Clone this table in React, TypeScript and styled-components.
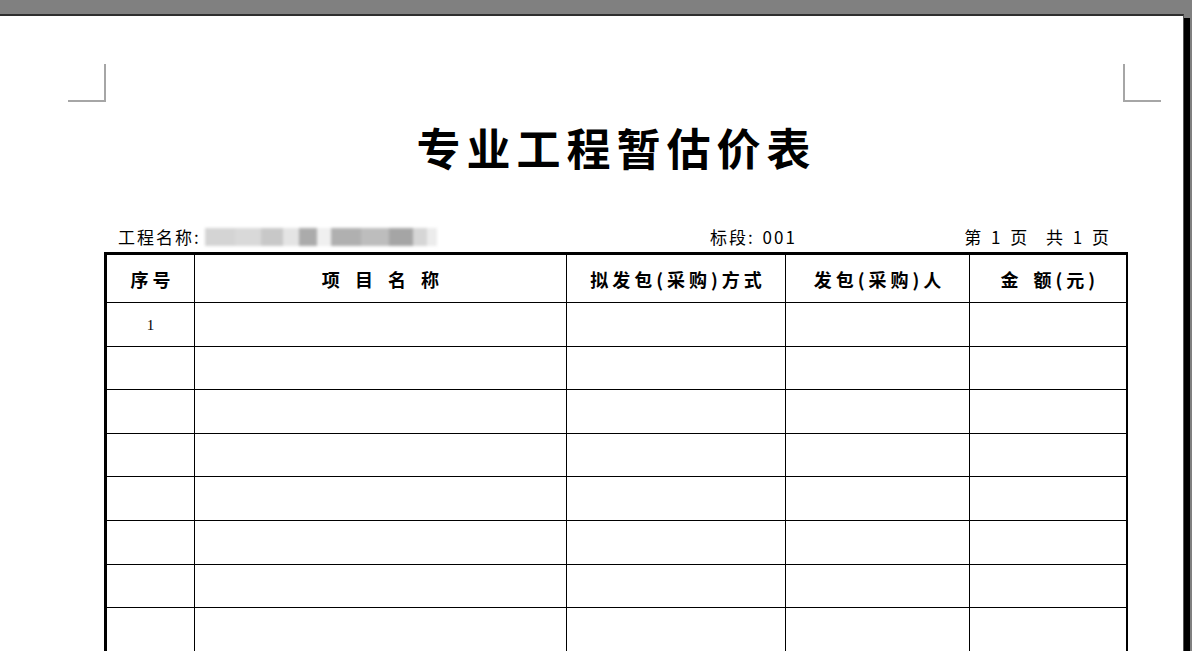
import React from "react";
import styled, { createGlobalStyle } from "styled-components";

const Global = createGlobalStyle`
  html, body { margin: 0; padding: 0; }
  body {
    background: #808080;
    font-family: "Noto Sans CJK SC", "Noto Sans", sans-serif;
    color: #000;
    overflow: hidden;
  }
`;

const Viewport = styled.div`
  width: 1192px;
  height: 651px;
  overflow: hidden;
  background: #808080;
  padding-top: 14px;
  box-sizing: border-box;
`;

const Page = styled.div`
  width: 1184px;
  height: 700px;
  background: #fff;
  border-top: 2px solid #2e2e2e;
  border-right: 1px solid #555;
  box-sizing: border-box;
  box-shadow: 6px 4px 0 0 #000;
  padding-top: 48px;
`;

const MarkRow = styled.div`
  display: flex;
  justify-content: space-between;
  padding: 0 22px 0 68px;
`;

const Mark = styled.div<{ $side: "left" | "right" }>`
  width: 36px;
  height: 36px;
  border-bottom: 2px solid #a6a6a6;
  ${(p) =>
    p.$side === "left"
      ? "border-right: 2px solid #a6a6a6;"
      : "border-left: 2px solid #a6a6a6;"}
`;

const Title = styled.h1`
  margin: 17px 0 0;
  text-align: center;
  font-size: 44px;
  line-height: 56px;
  font-weight: 700;
  letter-spacing: 6px;
  padding-left: 50px;
`;

const Sheet = styled.div`
  margin-left: 104px;
  width: 1022px;
  margin-top: 47px;
`;

const InfoRow = styled.div`
  display: flex;
  align-items: center;
  height: 30px;
  font-size: 17px;
  padding-left: 14px;
  padding-right: 16px;
  line-height: 22px;
`;

const ProjectName = styled.div`
  display: flex;
  align-items: center;
  width: 592px;
  letter-spacing: 2px;
`;

const Blurred = styled.div`
  display: flex;
  height: 18px;
  margin-left: 4px;
  filter: blur(1.5px);
`;

const BlurBlock = styled.span<{ $w: number; $c: string }>`
  display: block;
  width: ${(p) => p.$w}px;
  height: 100%;
  background: ${(p) => p.$c};
`;

const Section = styled.div`
  letter-spacing: 2px;
  word-spacing: 2px;
`;

const PageNo = styled.div`
  margin-left: auto;
  letter-spacing: 1px;
  word-spacing: 4px;
  white-space: pre;
`;

const Table = styled.table`
  width: 1021px;
  table-layout: fixed;
  border-collapse: collapse;
  border-top: 3px solid #000;
  border-left: 3px solid #000;
  border-right: 2px solid #000;
`;

const HeadCell = styled.th`
  height: 47px;
  border: 1px solid #000;
  font-size: 18px;
  font-weight: 700;
  text-align: center;
  padding: 0 0 0 4px;
  letter-spacing: 4px;
  word-spacing: 3px;
  white-space: pre;
`;

const Cell = styled.td`
  height: 43.6px;
  border: 1px solid #000;
  text-align: center;
  padding: 3px 0 0;
  font-family: "Liberation Serif", "DejaVu Serif", serif;
  font-size: 15px;
  box-sizing: border-box;
`;

const cols = [89, 372, 219, 184, 157];
const headers = ["序号", "项 目 名 称", "拟发包(采购)方式", "发包(采购)人", "金 额(元)"];
const blur = [
  { w: 30, c: "#d4d4d4" },
  { w: 26, c: "#d9d9d9" },
  { w: 22, c: "#c8c8c8" },
  { w: 16, c: "#e4e4e4" },
  { w: 18, c: "#ababab" },
  { w: 14, c: "#f0f0f0" },
  { w: 30, c: "#b0b0b0" },
  { w: 28, c: "#bdbdbd" },
  { w: 24, c: "#a5a5a5" },
  { w: 14, c: "#d6d6d6" },
  { w: 10, c: "#ececec" },
];

export default function App() {
  return (
    <>
      <Global />
      <Viewport>
        <Page>
          <MarkRow>
            <Mark $side="left" />
            <Mark $side="right" />
          </MarkRow>
          <Title>专业工程暂估价表</Title>
          <Sheet>
            <InfoRow>
              <ProjectName>
                工程名称:
                <Blurred>
                  {blur.map((b, i) => (
                    <BlurBlock key={i} $w={b.w} $c={b.c} />
                  ))}
                </Blurred>
              </ProjectName>
              <Section>标段: 001</Section>
              <PageNo>{"第 1 页  共 1 页"}</PageNo>
            </InfoRow>
            <Table>
              <colgroup>
                {cols.map((w, i) => (
                  <col key={i} style={{ width: w }} />
                ))}
              </colgroup>
              <thead>
                <tr>
                  {headers.map((h) => (
                    <HeadCell key={h}>{h}</HeadCell>
                  ))}
                </tr>
              </thead>
              <tbody>
                {Array.from({ length: 9 }).map((_, r) => (
                  <tr key={r}>
                    {cols.map((_, c) => (
                      <Cell key={c}>{r === 0 && c === 0 ? "1" : ""}</Cell>
                    ))}
                  </tr>
                ))}
              </tbody>
            </Table>
          </Sheet>
        </Page>
      </Viewport>
    </>
  );
}
